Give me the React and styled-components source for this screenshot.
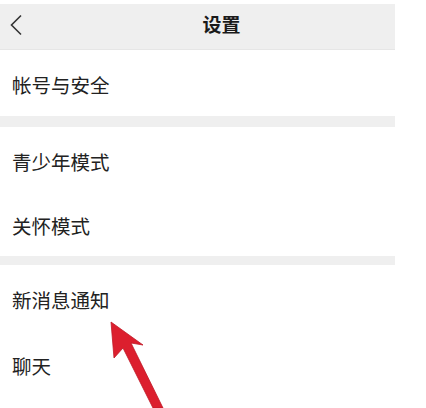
import styled, { createGlobalStyle } from "styled-components";

const GlobalStyle = createGlobalStyle`
  html, body {
    margin: 0;
    padding: 0;
    background: #ffffff;
    overflow: hidden;
  }
  body {
    font-family: "Noto Sans CJK SC", "Noto Sans", sans-serif;
    color: #222222;
  }
`;

const Page = styled.div`
  position: relative;
  width: 395px;
  height: 408px;
  padding-top: 4px;
  box-sizing: border-box;
`;

const Header = styled.div`
  display: grid;
  grid-template-columns: 60px 1fr 12px;
  align-items: center;
  height: 46px;
  background: #efefef;
  border-bottom: 1px solid #e6e6e6;
  box-sizing: border-box;
`;

const BackButton = styled.div`
  display: flex;
  align-items: center;
  justify-content: flex-start;
  padding-left: 9px;
  margin-top: -4px;
  color: #333333;
`;

const Title = styled.div`
  text-align: center;
  font-size: 19px;
  font-weight: 700;
  color: #1a1a1a;
  margin-top: -6px;
`;

const Gap = styled.div`
  height: ${(p) => p.$h}px;
  background: #efefef;
`;

const Row = styled.div`
  display: flex;
  align-items: center;
  height: ${(p) => p.$h || 65}px;
  padding: 3px 0 0 12px;
  box-sizing: border-box;
  font-size: 19.5px;
  color: #222222;
  background: #ffffff;
`;

const Pointer = styled.svg`
  position: absolute;
  left: 100px;
  top: 315px;
  pointer-events: none;
`;

const BackIcon = () => (
  <svg width="14" height="22" viewBox="0 0 14 22">
    <path d="M12 1.5 L2.5 11 L12 20.5" fill="none" stroke="#333" strokeWidth="1.6" />
  </svg>
);

const groups = [
  { gapBefore: 0, rows: [{ label: "帐号与安全", h: 66 }] },
  {
    gapBefore: 11,
    rows: [
      { label: "青少年模式", h: 65 },
      { label: "关怀模式", h: 64 },
    ],
  },
  {
    gapBefore: 9,
    rows: [
      { label: "新消息通知", h: 66 },
      { label: "聊天", h: 66 },
    ],
  },
];

export default function App() {
  return (
    <>
      <GlobalStyle />
      <Page>
        <Header>
          <BackButton>
            <BackIcon />
          </BackButton>
          <Title>设置</Title>
          <div />
        </Header>
        {groups.map((g, i) => (
          <div key={i}>
            {g.gapBefore > 0 && <Gap $h={g.gapBefore} />}
            {g.rows.map((r) => (
              <Row key={r.label} $h={r.h}>
                {r.label}
              </Row>
            ))}
          </div>
        ))}
        <Pointer width="70" height="93" viewBox="0 0 70 93">
          <polygon
            points="11,7 43,30 31,28 63,93 53,93 23,33 14,43"
            fill="#dc1f2e"
            stroke="#c01826"
            strokeWidth="0.8"
            strokeLinejoin="round"
          />
        </Pointer>
      </Page>
    </>
  );
}
